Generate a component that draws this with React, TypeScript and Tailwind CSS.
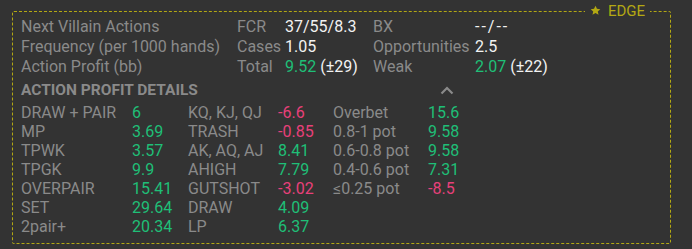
import React from 'react';

// panel colours
const GREEN = 'text-[#1fbf77]';
const RED = 'text-[#e8407a]';

type Cell = { label: string; value: string; tone: 'g' | 'r' };

const details: Cell[][] = [
  [
    { label: 'DRAW + PAIR', value: '6', tone: 'g' },
    { label: 'KQ, KJ, QJ', value: '-6.6', tone: 'r' },
    { label: 'Overbet', value: '15.6', tone: 'g' },
  ],
  [
    { label: 'MP', value: '3.69', tone: 'g' },
    { label: 'TRASH', value: '-0.85', tone: 'r' },
    { label: '0.8-1 pot', value: '9.58', tone: 'g' },
  ],
  [
    { label: 'TPWK', value: '3.57', tone: 'g' },
    { label: 'AK, AQ, AJ', value: '8.41', tone: 'g' },
    { label: '0.6-0.8 pot', value: '9.58', tone: 'g' },
  ],
  [
    { label: 'TPGK', value: '9.9', tone: 'g' },
    { label: 'AHIGH', value: '7.79', tone: 'g' },
    { label: '0.4-0.6 pot', value: '7.31', tone: 'g' },
  ],
  [
    { label: 'OVERPAIR', value: '15.41', tone: 'g' },
    { label: 'GUTSHOT', value: '-3.02', tone: 'r' },
    { label: '≤0.25 pot', value: '-8.5', tone: 'r' },
  ],
  [
    { label: 'SET', value: '29.64', tone: 'g' },
    { label: 'DRAW', value: '4.09', tone: 'g' },
  ],
  [
    { label: '2pair+', value: '20.34', tone: 'g' },
    { label: 'LP', value: '6.37', tone: 'g' },
  ],
];

const Star = () => (
  <svg width="11" height="11" viewBox="0 0 24 24" className="inline-block mr-[7px] -mt-[3px]">
    <path
      d="M12 1.5l3.2 6.9 7.3.8-5.5 5 1.6 7.3L12 17.7l-6.6 3.8 1.6-7.3-5.5-5 7.3-.8z"
      fill="#b3a813"
    />
  </svg>
);

const App: React.FC = () => {
  return (
    <div className="w-[692px] h-[249px] bg-[#333333] px-[12px] pt-[5px] font-['Roboto',sans-serif] text-[16px] text-[#8a8a8a] overflow-hidden">
      <fieldset className="w-[659px] border border-dashed border-[#b3a813] rounded-[2px] pl-[8px] pb-[7px]">
        <legend className="ml-auto mr-[20px] px-[5px] leading-[12px] text-[15px] text-[#b3a813]">
          <Star />
          EDGE
        </legend>

        {/* summary */}
        <div className="grid grid-cols-[216px_48px_88px_102px_1fr] leading-[20px]">
          <span>Next Villain Actions</span>
          <span>FCR</span>
          <span className="text-[#f2f2f2]">37/55/8.3</span>
          <span>BX</span>
          <span className="text-[#f2f2f2] tracking-[2px]">--/--</span>

          <span>Frequency (per 1000 hands)</span>
          <span>Cases</span>
          <span className="text-[#f2f2f2]">1.05</span>
          <span>Opportunities</span>
          <span className="text-[#f2f2f2]">2.5</span>

          <span>Action Profit (bb)</span>
          <span>Total</span>
          <span className="whitespace-nowrap">
            <span className={GREEN}>9.52</span> <span className="text-[#f2f2f2]">(±29)</span>
          </span>
          <span>Weak</span>
          <span>
            <span className={GREEN}>2.07</span> <span className="text-[#f2f2f2]">(±22)</span>
          </span>
        </div>

        {/* details header */}
        <div className="flex items-center h-[25px] mt-[1px]">
          <span className="font-bold w-[419px] text-[15.5px]">ACTION PROFIT DETAILS</span>
          <svg width="14" height="9" viewBox="0 0 14 9">
            <path d="M1.5 7.5L7 2l5.5 5.5" stroke="#8a8a8a" strokeWidth="2.2" fill="none" />
          </svg>
        </div>

        <div className="grid grid-cols-[111px_56px_90px_55px_95px_1fr] leading-[19px]">
          {details.map((row, i) =>
            [0, 1, 2].map((c) => {
              const cell = row[c];
              return (
                <React.Fragment key={`${i}-${c}`}>
                  <span>{cell ? cell.label : ''}</span>
                  <span className={cell ? (cell.tone === 'g' ? GREEN : RED) : ''}>{cell ? cell.value : ''}</span>
                </React.Fragment>
              );
            })
          )}
        </div>
      </fieldset>
    </div>
  );
};

export default App;
